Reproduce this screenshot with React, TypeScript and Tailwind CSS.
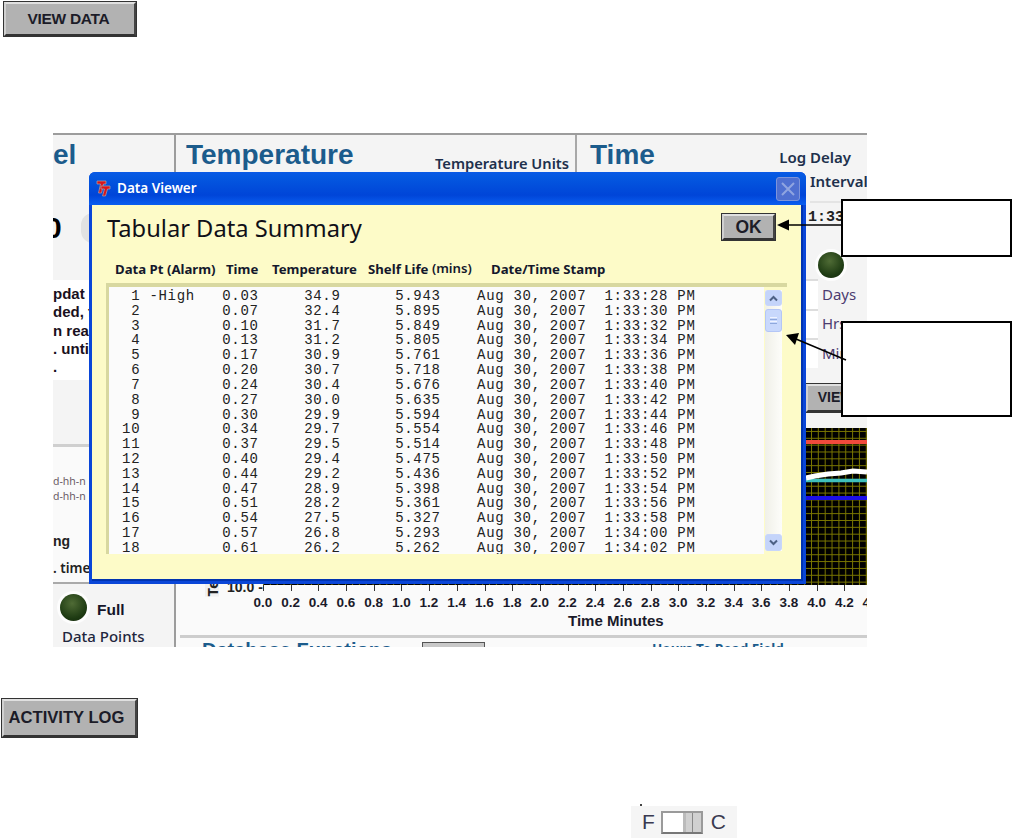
const SANS = "font-['Noto_Sans','Liberation_Sans',sans-serif]";

// alarm, time, temp, shelf life, clock
const ROWS: [string, string, string, string, string][] = [
  ['-High', '0.03', '34.9', '5.943', '1:33:28'],
  ['', '0.07', '32.4', '5.895', '1:33:30'],
  ['', '0.10', '31.7', '5.849', '1:33:32'],
  ['', '0.13', '31.2', '5.805', '1:33:34'],
  ['', '0.17', '30.9', '5.761', '1:33:36'],
  ['', '0.20', '30.7', '5.718', '1:33:38'],
  ['', '0.24', '30.4', '5.676', '1:33:40'],
  ['', '0.27', '30.0', '5.635', '1:33:42'],
  ['', '0.30', '29.9', '5.594', '1:33:44'],
  ['', '0.34', '29.7', '5.554', '1:33:46'],
  ['', '0.37', '29.5', '5.514', '1:33:48'],
  ['', '0.40', '29.4', '5.475', '1:33:50'],
  ['', '0.44', '29.2', '5.436', '1:33:52'],
  ['', '0.47', '28.9', '5.398', '1:33:54'],
  ['', '0.51', '28.2', '5.361', '1:33:56'],
  ['', '0.54', '27.5', '5.327', '1:33:58'],
  ['', '0.57', '26.8', '5.293', '1:34:00'],
  ['', '0.61', '26.2', '5.262', '1:34:02'],
];

const AXIS = ['0.0', '0.2', '0.4', '0.6', '0.8', '1.0', '1.2', '1.4', '1.6', '1.8', '2.0', '2.2', '2.4', '2.6', '2.8', '3.0', '3.2', '3.4', '3.6', '3.8', '4.0', '4.2', '4.4'];

function rowText(i: number) {
  const [alarm, time, temp, life, clock] = ROWS[i];
  const n = String(i + 1).padStart(3, ' ');
  return `${n} ${alarm.padEnd(5, ' ')}   ${time}     ${temp}      ${life}    Aug 30, 2007  ${clock} PM`;
}

function GrayButton({ label, className }: { label: string; className: string }) {
  return (
    <div className={`flex items-center justify-center bg-[#b2b2b2] border-2 border-t-[#e0e0e0] border-l-[#d0d0d0] border-r-[#444] border-b-[#333] outline-1 outline-[#333] font-['Liberation_Sans',sans-serif] text-[#1c1c28] ${className}`}>
      {label}
    </div>
  );
}

function Led({ className }: { className: string }) {
  return (
    <div className={`rounded-full bg-[radial-gradient(circle_at_45%_35%,#4f6b35,#1d3a12_65%,#14260c)] ring-[3px] ring-white/80 ${className}`} />
  );
}

function ChartPlot() {
  return (
    <svg width="604" height="157" className="block">
      <defs>
        <pattern id="grid" width="13.7" height="13.7" patternUnits="userSpaceOnUse">
          <path d="M0.5 0V13.7M7.3 0V13.7M0 3.5H13.7M0 10.3H13.7" stroke="#7a7600" strokeWidth="1" />
        </pattern>
      </defs>
      <rect width="604" height="157" fill="#000" />
      <rect width="604" height="157" fill="url(#grid)" />
      <rect x="0" y="12" width="604" height="4" fill="#f04a3c" />
      <path d="M543 52.5H604" stroke="#3fc0bc" strokeWidth="3.5" />
      <path d="M543 50L552 48L565 46L578 45L590 43L604 44" fill="none" stroke="#fff" strokeWidth="5" />
      <rect x="0" y="68" width="604" height="4" fill="#1c10e8" />
    </svg>
  );
}

function DataViewer() {
  return (
    <div className="absolute left-[36px] top-[39px] w-[717px] h-[412px] rounded-t-[6px] bg-[#0a46d8] p-[3px] pt-0 flex flex-col">
      <div className="h-[33px] -mx-[3px] px-[7px] rounded-t-[6px] flex items-center bg-[linear-gradient(#0a5ae6,#0458e0_15%,#0045d8_70%,#0a5ef0)]">
        <svg width="15" height="17" viewBox="0 0 15 17" className="shrink-0">
          <path d="M1 1H10V4H7.5L5.5 13H2.5L4.5 4H1Z" fill="#d8141c" stroke="#b0a8a8" strokeWidth="0.7" />
          <path d="M5 6H14V9H11.5L9.5 16H6.5L8.5 9H5Z" fill="#d8141c" stroke="#b0a8a8" strokeWidth="0.7" />
        </svg>
        <span className={`ml-[6px] text-white text-[13.5px] font-semibold ${SANS}`}>Data Viewer</span>
        <div className="ml-auto mr-[-1px] w-[24px] h-[24px] rounded-[3px] border border-[#7e94da] bg-[#4f6fd0] flex items-center justify-center">
          <svg width="16" height="16" viewBox="0 0 16 16">
            <path d="M2 2L14 14M14 2L2 14" stroke="#90a4e0" strokeWidth="2" />
          </svg>
        </div>
      </div>
      <div className="flex-1 bg-[#fdfbc8] border-r-2 border-b-2 border-[#0033b0] px-[15px] pt-[8px] flex flex-col">
        <div className="flex justify-between items-start">
          <div className={`text-[23.7px] leading-[30px] text-[#101018] ${SANS}`}>Tabular Data Summary</div>
          <GrayButton label="OK" className="w-[53px] h-[26px] mr-[11px] mt-[1px] text-[17.5px] font-bold" />
        </div>
        <div className={`mt-[17px] h-[20px] flex items-center text-[13.2px] font-bold text-[#14182c] whitespace-pre ${SANS}`}>
          <span className="ml-[8px] w-[111px]">Data Pt (Alarm)</span>
          <span className="w-[46px]">Time</span>
          <span className="w-[96px]">Temperature</span>
          <span className="w-[123px]">
            Shelf Life <span className="relative -top-px font-semibold">(mins)</span>
          </span>
          <span>Date/Time Stamp</span>
        </div>
        <div className="mt-[3px] h-[271px] w-[681px] -ml-[1px] border-t-[4px] border-l-[3px] border-[#d8d8a0] flex">
          <div className="w-[656px] h-full overflow-hidden bg-[#fbfbfb] pl-[4px] pt-[2px] font-['Liberation_Mono',monospace] text-[14px] leading-[14.82px] tracking-[0.7px] text-[#222] whitespace-pre">
            {ROWS.map((_, i) => (
              <div key={i}>{rowText(i)}</div>
            ))}
          </div>
          <div className="w-[17px] h-[261px] ml-[1px] mt-[3px] bg-[linear-gradient(90deg,#f0f0e8,#fdfdfa)] flex flex-col">
            <div className="h-[16px] rounded-[3px] border border-[#c8d6fa] bg-[#c4d4fa] flex items-center justify-center">
              <svg width="9" height="7" viewBox="0 0 9 7"><path d="M1 5.5L4.5 2L8 5.5" fill="none" stroke="#4d6185" strokeWidth="2" /></svg>
            </div>
            <div className="mt-[3px] h-[23px] rounded-[3px] border border-[#b4c6f6] bg-[#c8d8fc] flex flex-col items-center justify-center gap-[1px]">
              <div className="w-[7px] h-px bg-[#eef3ff]" />
              <div className="w-[7px] h-px bg-[#8ea8dc]" />
              <div className="w-[7px] h-px bg-[#eef3ff]" />
              <div className="w-[7px] h-px bg-[#8ea8dc]" />
            </div>
            <div className="flex-1" />
            <div className="h-[17px] rounded-[3px] border border-[#c8d6fa] bg-[#c4d4fa] flex items-center justify-center">
              <svg width="9" height="7" viewBox="0 0 9 7"><path d="M1 1.5L4.5 5L8 1.5" fill="none" stroke="#4d6185" strokeWidth="2" /></svg>
            </div>
          </div>
          <div className="w-[5px]" />
        </div>
      </div>
    </div>
  );
}

function UnitRow({ label }: { label: string }) {
  return (
    <div className="h-[29.5px] flex items-center">
      <div className="w-[12px] h-full -ml-[4px] bg-white border-t-[2px] border-[#ddd]" />
      <span className="ml-[4px] text-[15px] leading-[20px] text-[#4c3c70]">{label}</span>
    </div>
  );
}

function Screen() {
  return (
    <div className={`relative ml-[53px] w-[814px] h-[514px] overflow-hidden bg-[#f4f4f4] flex ${SANS}`}>
      {/* left column */}
      <div className="w-[123px] shrink-0 border-t-[2px] border-[#9c9c9c] border-r-[2px] flex flex-col">
        <div className="h-[70px] text-[28px] leading-[40px] font-bold text-[#1c5c8c] font-['Liberation_Sans',sans-serif]">el</div>
        <div className="h-[75px] flex items-start pt-[8px] overflow-hidden">
          <span className="-ml-[8px] text-[30px] font-bold leading-[30px] text-black font-['Liberation_Sans',sans-serif]">0</span>
          <div className="ml-[19px] w-[24px] h-[30px] rounded-full bg-[#e2e2e2]" />
        </div>
        <div className="h-[100px] bg-white pt-[5px] text-[15px] leading-[18.3px] font-bold text-[#1a1020] whitespace-pre font-['Liberation_Sans',sans-serif]">
          <div>pdat</div>
          <div>ded, f</div>
          <div>n rea</div>
          <div>. unti</div>
          <div>.</div>
        </div>
        <div className="h-[67px] border-b-[3px] border-[#cfcfcf]" />
        <div className="h-[135px] bg-[#fafafa] pt-[27px] flex flex-col">
          <div className="text-[10.5px] leading-[15px] text-[#6a5a66]">d-hh-n</div>
          <div className="text-[10.5px] leading-[15px] text-[#6a5a66]">d-hh-n</div>
          <div className="mt-[28px] text-[14px] leading-[18px] font-bold text-[#222] font-['Liberation_Sans',sans-serif]">ng</div>
          <div className="mt-[9px] text-[13.5px] leading-[18px] font-semibold text-[#222]">. time</div>
        </div>
        <div className="flex-1 border-t-[2px] border-[#aaa] pl-[7px] pt-[9px]">
          <div className="flex items-center">
            <Led className="w-[27px] h-[27px]" />
            <span className="ml-[10px] mt-[5px] text-[15.5px] font-bold text-[#15152a] font-['Liberation_Sans',sans-serif]">Full</span>
          </div>
          <div className="mt-[6px] ml-[2px] text-[15px] leading-[18px] text-[#22263c] font-medium whitespace-pre">Data Points</div>
        </div>
      </div>

      {/* temperature, time and chart */}
      <div className="flex-1 min-w-0 flex flex-col">
        <div className="h-[295px] shrink-0 flex border-t-[2px] border-[#9c9c9c]">
          <div className="w-[401px] shrink-0 border-r-[2px] border-[#a8a8a8] pl-[10px] flex justify-between">
            <span className="text-[28px] leading-[40px] font-bold text-[#1c5c8c] font-['Liberation_Sans',sans-serif]">Temperature</span>
            <span className="mr-[6px] mt-[18px] text-[14.7px] font-semibold leading-[20px] text-[#20304c] whitespace-pre">Temperature Units</span>
          </div>
          <div className="flex-1 min-w-0 flex flex-col">
            <div className="flex justify-between pl-[13px]">
              <span className="text-[28px] leading-[40px] font-bold text-[#1c5c8c] font-['Liberation_Sans',sans-serif]">Time</span>
              <span className="mr-[16px] mt-[12px] text-[15px] font-semibold leading-[20px] text-[#20304c] whitespace-pre">Log Delay</span>
            </div>
            <div className="flex flex-col items-start pl-[233px]">
              <span className="-mt-[4px] text-[15px] leading-[20px] font-semibold text-[#20304c] whitespace-pre">Interval</span>
              <div className="w-full h-[2px] mt-[10px] bg-[#e4e4e4]" />
              <span className="-ml-[2px] mt-[6px] font-['Liberation_Mono',monospace] font-bold text-[15px] leading-[18px] text-[#222]">1:33</span>
              <Led className="ml-[8px] mt-[25px] w-[26px] h-[26px]" />
              <div className="mt-[1px] w-full">
                <UnitRow label="Days" />
                <UnitRow label="Hrs" />
                <UnitRow label="Min" />
              </div>
              <GrayButton label="VIEW DATA" className="-ml-[4px] mt-[16px] w-[100px] h-[28px] text-[14px] font-bold shrink-0" />
            </div>
          </div>
        </div>
        <div className="relative flex-1 bg-[#fafafa]">
          <div className="ml-[87px]">
            <ChartPlot />
          </div>
          <div className="ml-[87px] h-[9px] flex w-[640px]">
            {AXIS.map((a) => (
              <div key={a} className="w-[27.7px] shrink-0">
                <div className="w-px h-[6px] bg-[#333]" />
              </div>
            ))}
          </div>
          <div className="ml-[73px] flex w-[660px] text-[13.5px] leading-[17px] font-bold text-[#1a1a2a] font-['Liberation_Sans',sans-serif]">
            {AXIS.map((a) => (
              <div key={a} className="w-[27.7px] shrink-0 text-center">{a}</div>
            ))}
          </div>
          <div className="ml-[392px] mt-[1px] text-[15px] leading-[17px] font-bold text-[#1a1a2a] font-['Liberation_Sans',sans-serif]">Time Minutes</div>
          <div className="mt-[6px] ml-[4px] h-[3px] bg-[#cdcdcd]" />
          <div className="pl-[26px] flex items-start">
            <span className="-mt-[1px] text-[20px] leading-[26px] font-bold text-[#1c5c8c] whitespace-pre font-['Liberation_Sans',sans-serif]">Database Functions</span>
            <div className="ml-[30px] mt-[4px] w-[63px] h-[20px] bg-[#c8c8c8] border border-[#555]" />
            <span className="ml-[167px] mt-[1px] text-[13.5px] leading-[20px] font-bold text-[#1c5c8c] whitespace-pre">Hours To Read Field</span>
          </div>
          {/* y axis label and bottom value, sitting on top of the axis */}
          <span className="absolute left-[29px] top-[152px] [writing-mode:vertical-rl] rotate-180 text-[15px] leading-[14px] font-bold text-[#222] bg-[#f0f0f0]">Te</span>
          <span className="absolute left-[51px] top-[153px] text-[14px] leading-[12px] font-bold text-[#222] font-['Liberation_Sans',sans-serif] whitespace-pre">10.0 -</span>
        </div>
      </div>

      <DataViewer />
    </div>
  );
}

export default function App() {
  return (
    <div className="relative w-[1012px] h-[840px] overflow-hidden bg-white">
      <div className="pt-[2px] pl-[4px]">
        <GrayButton label="VIEW DATA" className="w-[132px] h-[34px] pr-[3px] text-[15.5px] font-bold tracking-[-0.3px]" />
      </div>
      <div className="mt-[97px]">
        <Screen />
      </div>
      <div className="mt-[52px] pl-[2px]">
        <GrayButton label="ACTIVITY LOG" className="w-[135px] h-[38px] pr-[6px] text-[16.6px] font-bold" />
      </div>
      <div className="mt-[69px] ml-[631px] w-[106px] h-[32px] bg-[#f5f5f5] flex items-center font-['Liberation_Sans',sans-serif] text-[21px] text-[#3a3a50]">
        <span className="ml-[11px]">F</span>
        <div className="ml-[6px] w-[42px] h-[23px] border-2 border-[#9a9a9a] border-b-[#777] bg-white flex justify-end">
          <div className="w-[18px] bg-[#d0d0d0] border-l-[3px] border-[#bbb] relative">
            <div className="absolute left-[6px] top-0 bottom-0 w-px bg-[#888]" />
          </div>
        </div>
        <span className="ml-[8px]">C</span>
      </div>

      {/* callouts drawn over the screenshot */}
      <div className="absolute left-[640px] top-[804px] w-[2px] h-[2px] bg-[#444]" />
      <div className="absolute left-[841px] top-[199px] w-[171px] h-[58px] bg-white border-2 border-black" />
      <div className="absolute left-[841px] top-[321px] w-[171px] h-[96px] bg-white border-2 border-black" />
      <svg width="80" height="160" viewBox="0 0 80 160" className="absolute left-[776px] top-[215px]">
        <path d="M12 10L66 10" stroke="#000" strokeWidth="1.5" />
        <path d="M1 10L13 4.5V15.5Z" fill="#000" />
        <path d="M20 124L70 145" stroke="#000" strokeWidth="1.5" />
        <path d="M10 120L23 118L19 130Z" fill="#000" />
      </svg>
    </div>
  );
}
